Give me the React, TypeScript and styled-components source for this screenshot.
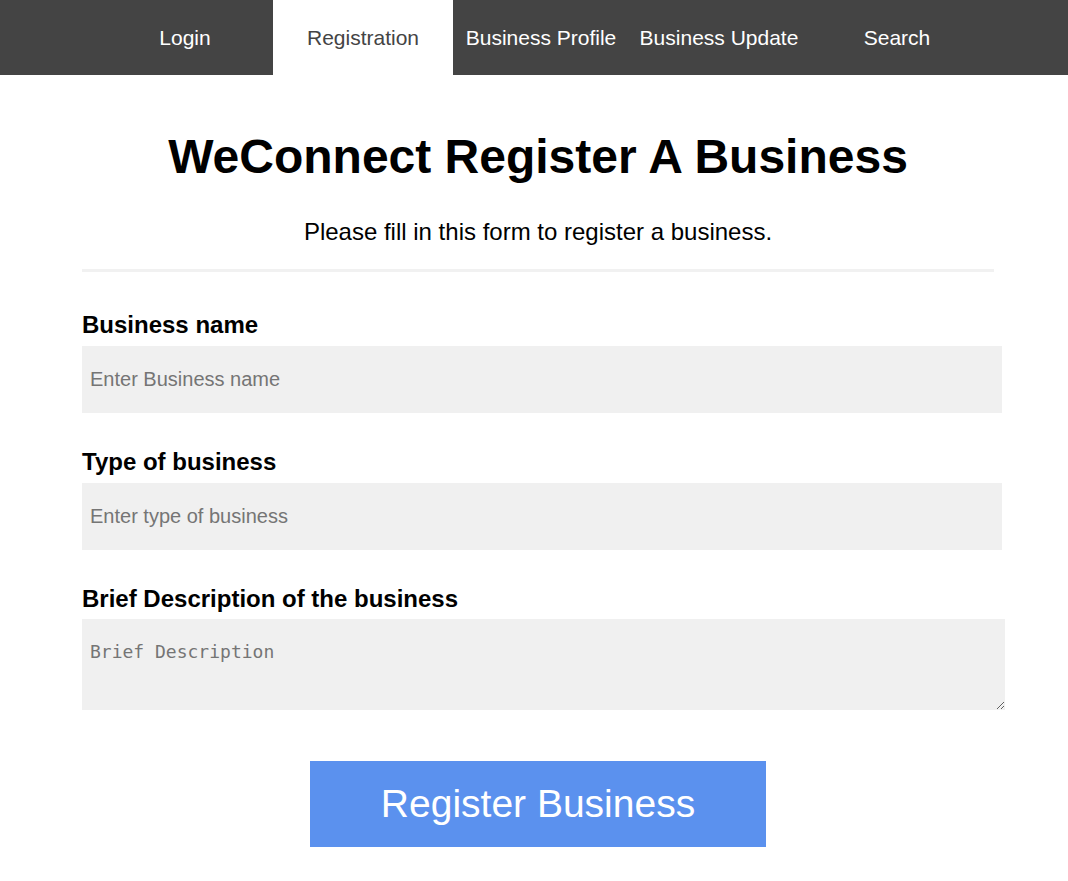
import React from "react";
import styled, { createGlobalStyle } from "styled-components";

const Global = createGlobalStyle`
  html, body { margin: 0; padding: 0; background: #fff; }
  body { font-family: "Liberation Sans", Arial, sans-serif; color: #000; }
  * { box-sizing: border-box; }
`;

const Nav = styled.nav`
  display: flex;
  height: 75px;
  background: #444444;
  padding-left: 96px;
`;

const NavItem = styled.a<{ $active?: boolean }>`
  flex: 0 0 ${(p) => (p.$active ? "180px" : "178px")};
  margin: ${(p) => (p.$active ? "0 -1px" : "0")};
  display: flex;
  align-items: center;
  justify-content: center;
  font-size: 21px;
  white-space: nowrap;
  text-decoration: none;
  color: ${(p) => (p.$active ? "#444444" : "#ffffff")};
  background: ${(p) => (p.$active ? "#ffffff" : "transparent")};
`;

const Main = styled.main`
  padding-left: 82px;
  padding-top: 54px;
  width: 994px;
`;

const Container = styled.div`
  width: 912px;
  display: flex;
  flex-direction: column;
`;

const Title = styled.h1`
  margin: 0;
  font-size: 48px;
  font-weight: bold;
  line-height: 55px;
  text-align: center;
`;

const Subtitle = styled.p`
  margin: 34px 0 0;
  font-size: 24px;
  line-height: 28px;
  text-align: center;
`;

const Rule = styled.hr`
  margin: 23px 0 38px;
  border: none;
  height: 3px;
  background: #f1f1f1;
`;

const Field = styled.div`
  display: flex;
  flex-direction: column;
  margin-bottom: 34px;
`;

const Label = styled.label`
  font-size: 24px;
  font-weight: bold;
  line-height: 30px;
  margin-bottom: 6px;
  white-space: nowrap;
`;

const TextInput = styled.input`
  width: 920px;
  height: 67px;
  border: none;
  outline: none;
  background: #f0f0f0;
  padding: 0 8px;
  font-family: "Liberation Sans", Arial, sans-serif;
  font-size: 20px;
  color: #000;
  &::placeholder { color: #757575; }
`;

const TextArea = styled.textarea`
  width: 923px;
  height: 91px;
  border: none;
  outline: none;
  background: #f0f0f0;
  padding: 22px 8px;
  margin-top: -1px;
  font-family: "DejaVu Sans Mono", "Liberation Mono", monospace;
  font-size: 18px;
  line-height: 21px;
  color: #000;
  display: block;
  &::placeholder { color: #757575; }
`;

const Actions = styled.div`
  display: flex;
  justify-content: center;
  margin-top: 17px;
`;

const Button = styled.button`
  width: 456px;
  height: 86px;
  border: none;
  background: #5b91ee;
  color: #fff;
  font-family: "Liberation Sans", Arial, sans-serif;
  font-size: 39px;
  cursor: pointer;
`;

export default function App() {
  return (
    <>
      <Global />
      <Nav>
        <NavItem href="#">Login</NavItem>
        <NavItem href="#" $active>Registration</NavItem>
        <NavItem href="#">Business Profile</NavItem>
        <NavItem href="#">Business Update</NavItem>
        <NavItem href="#">Search</NavItem>
      </Nav>
      <Main>
        <Container>
          <Title>WeConnect Register A Business</Title>
          <Subtitle>Please fill in this form to register a business.</Subtitle>
          <Rule />
          <Field>
            <Label>Business name</Label>
            <TextInput type="text" placeholder="Enter Business name" />
          </Field>
          <Field>
            <Label>Type of business</Label>
            <TextInput type="text" placeholder="Enter type of business" />
          </Field>
          <Field>
            <Label>Brief Description of the business</Label>
            <TextArea placeholder="Brief Description" />
          </Field>
          <Actions>
            <Button>Register Business</Button>
          </Actions>
        </Container>
      </Main>
    </>
  );
}
